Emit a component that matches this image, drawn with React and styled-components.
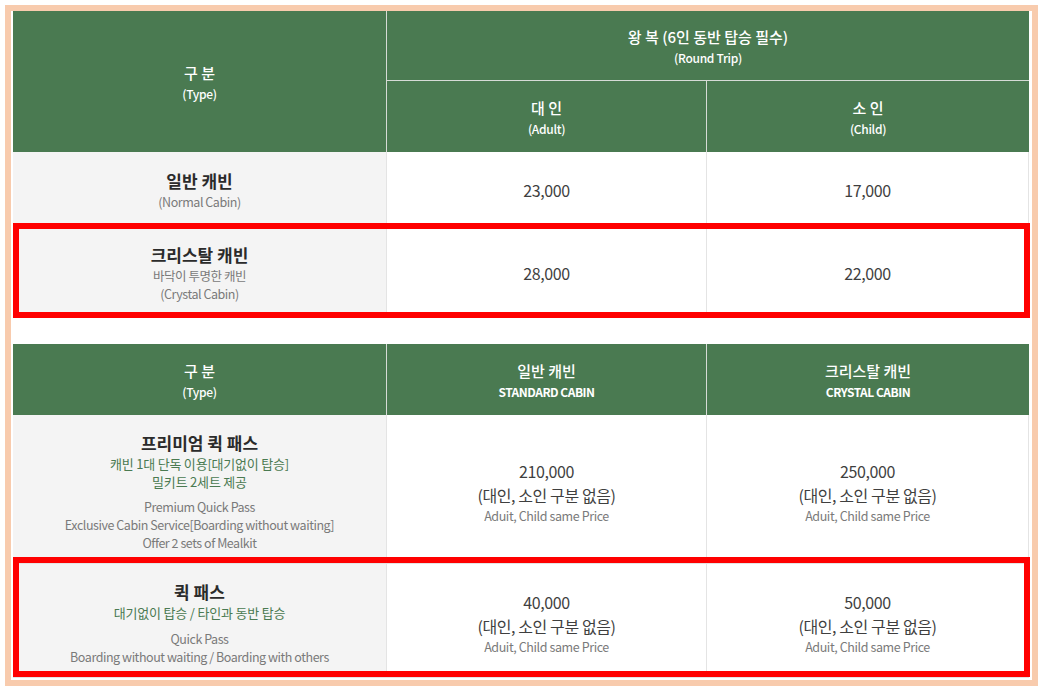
import React from "react";
import styled, { createGlobalStyle, css } from "styled-components";

const Global = createGlobalStyle`
  html, body { margin: 0; padding: 0; background: #ffffff; }
  body { font-family: "Noto Sans CJK KR", "Noto Sans", sans-serif; }
  * { box-sizing: border-box; }
`;

const Frame = styled.div`
  margin: 5px 0 0 5px;
  width: 1033px;
  border: 6px solid #f8cbad;
  padding: 0 3px 2px 2px;
  display: flex;
  flex-direction: column;
  gap: 26px;
  background: #ffffff;
`;

const Table = styled.div`
  display: flex;
  flex-direction: column;
`;

const Grid = styled.div`
  display: grid;
  grid-template-columns: 374px 320px 1fr;
`;

const HeadGrid = styled(Grid)`
  grid-template-rows: ${(p) => p.$rows};
  background: #4a7a51;
`;

const HeadCell = styled.div`
  display: flex;
  flex-direction: column;
  align-items: center;
  justify-content: center;
  color: #ffffff;
  text-align: center;
  border-right: ${(p) => (p.$last ? "none" : "1px solid #d6dbd6")};
  ${(p) => p.$tall && css`grid-row: 1 / span 2;`}
  ${(p) => p.$wide && css`grid-column: 2 / span 2; border-bottom: 1px solid #d6dbd6; border-right: none;`}
`;

const HeadTitle = styled.div`
  font-size: 15px;
  font-weight: 500;
  line-height: 24px;
`;

const HeadSub = styled.div`
  font-size: 12px;
  font-weight: ${(p) => (p.$bold ? 700 : 500)};
  line-height: 18px;
  letter-spacing: ${(p) => (p.$bold ? "-0.5px" : "-0.3px")};
`;

const Row = styled(Grid)`
  height: ${(p) => p.$h}px;
  position: relative;
  & > * { padding-top: ${(p) => p.$pt || 0}px; }
  ${(p) =>
    p.$mark &&
    css`
      &::after {
        content: "";
        position: absolute;
        left: 0;
        right: -1px;
        top: ${p.$mt}px;
        bottom: ${p.$mb}px;
        border: 6px solid #ff0000;
        pointer-events: none;
      }
    `}
`;

const Cell = styled.div`
  display: flex;
  flex-direction: column;
  align-items: center;
  justify-content: center;
  text-align: center;
  border-bottom: 1px solid #e4e4e4;
  border-right: 1px solid #e4e4e4;
  background: ${(p) => (p.$label ? "#f4f4f4" : "#ffffff")};
`;

const Title = styled.div`
  font-size: 17px;
  font-weight: 700;
  color: #2b2b2b;
  line-height: 24px;
`;

const Sub = styled.div`
  font-size: 12.5px;
  color: #7a7a7a;
  line-height: 18px;
  letter-spacing: -0.45px;
`;

const Green = styled.div`
  font-size: 13px;
  color: #4a7a51;
  line-height: 17.5px;
  letter-spacing: -0.2px;
`;

const EngBlock = styled.div`
  margin-top: 8px;
  display: flex;
  flex-direction: column;
  align-items: center;
`;

const Price = styled.div`
  font-size: 16px;
  color: #3f3f3f;
  line-height: 24px;
  letter-spacing: -0.4px;
`;

const PriceNote = styled.div`
  font-size: 12.5px;
  color: #7a7a7a;
  line-height: 18px;
  letter-spacing: -0.4px;
`;

function PriceCell({ amount, shared }) {
  return (
    <Cell>
      <Price>{amount}</Price>
      {shared && (
        <>
          <Price>(대인, 소인 구분 없음)</Price>
          <PriceNote>Aduit, Child same Price</PriceNote>
        </>
      )}
    </Cell>
  );
}

export default function App() {
  return (
    <>
      <Global />
      <Frame>
        <Table>
          <HeadGrid $rows="70px 71px">
            <HeadCell $tall>
              <HeadTitle>구 분</HeadTitle>
              <HeadSub>(Type)</HeadSub>
            </HeadCell>
            <HeadCell $wide>
              <HeadTitle>왕 복 (6인 동반 탑승 필수)</HeadTitle>
              <HeadSub>(Round Trip)</HeadSub>
            </HeadCell>
            <HeadCell>
              <HeadTitle>대 인</HeadTitle>
              <HeadSub>(Adult)</HeadSub>
            </HeadCell>
            <HeadCell $last>
              <HeadTitle>소 인</HeadTitle>
              <HeadSub>(Child)</HeadSub>
            </HeadCell>
          </HeadGrid>
          <Row $h={76}>
            <Cell $label>
              <Title>일반 캐빈</Title>
              <Sub>(Normal Cabin)</Sub>
            </Cell>
            <PriceCell amount="23,000" />
            <PriceCell amount="17,000" />
          </Row>
          <Row $h={90} $mark $mt={-5} $mb={0}>
            <Cell $label>
              <Title>크리스탈 캐빈</Title>
              <Sub>바닥이 투명한 캐빈</Sub>
              <Sub>(Crystal Cabin)</Sub>
            </Cell>
            <PriceCell amount="28,000" />
            <PriceCell amount="22,000" />
          </Row>
        </Table>

        <Table>
          <HeadGrid $rows="71px">
            <HeadCell>
              <HeadTitle>구 분</HeadTitle>
              <HeadSub>(Type)</HeadSub>
            </HeadCell>
            <HeadCell>
              <HeadTitle>일반 캐빈</HeadTitle>
              <HeadSub $bold>STANDARD CABIN</HeadSub>
            </HeadCell>
            <HeadCell $last>
              <HeadTitle>크리스탈 캐빈</HeadTitle>
              <HeadSub $bold>CRYSTAL CABIN</HeadSub>
            </HeadCell>
          </HeadGrid>
          <Row $h={149} $pt={5}>
            <Cell $label>
              <Title>프리미엄 퀵 패스</Title>
              <Green>캐빈 1대 단독 이용[대기없이 탑승]</Green>
              <Green>밀키트 2세트 제공</Green>
              <EngBlock>
                <Sub>Premium Quick Pass</Sub>
                <Sub>Exclusive Cabin Service[Boarding without waiting]</Sub>
                <Sub>Offer 2 sets of Mealkit</Sub>
              </EngBlock>
            </Cell>
            <PriceCell amount="210,000" shared />
            <PriceCell amount="250,000" shared />
          </Row>
          <Row $h={114} $pt={5} $mark $mt={-7} $mb={1}>
            <Cell $label>
              <Title>퀵 패스</Title>
              <Green>대기없이 탑승 / 타인과 동반 탑승</Green>
              <EngBlock>
                <Sub>Quick Pass</Sub>
                <Sub>Boarding without waiting / Boarding with others</Sub>
              </EngBlock>
            </Cell>
            <PriceCell amount="40,000" shared />
            <PriceCell amount="50,000" shared />
          </Row>
        </Table>
      </Frame>
    </>
  );
}
